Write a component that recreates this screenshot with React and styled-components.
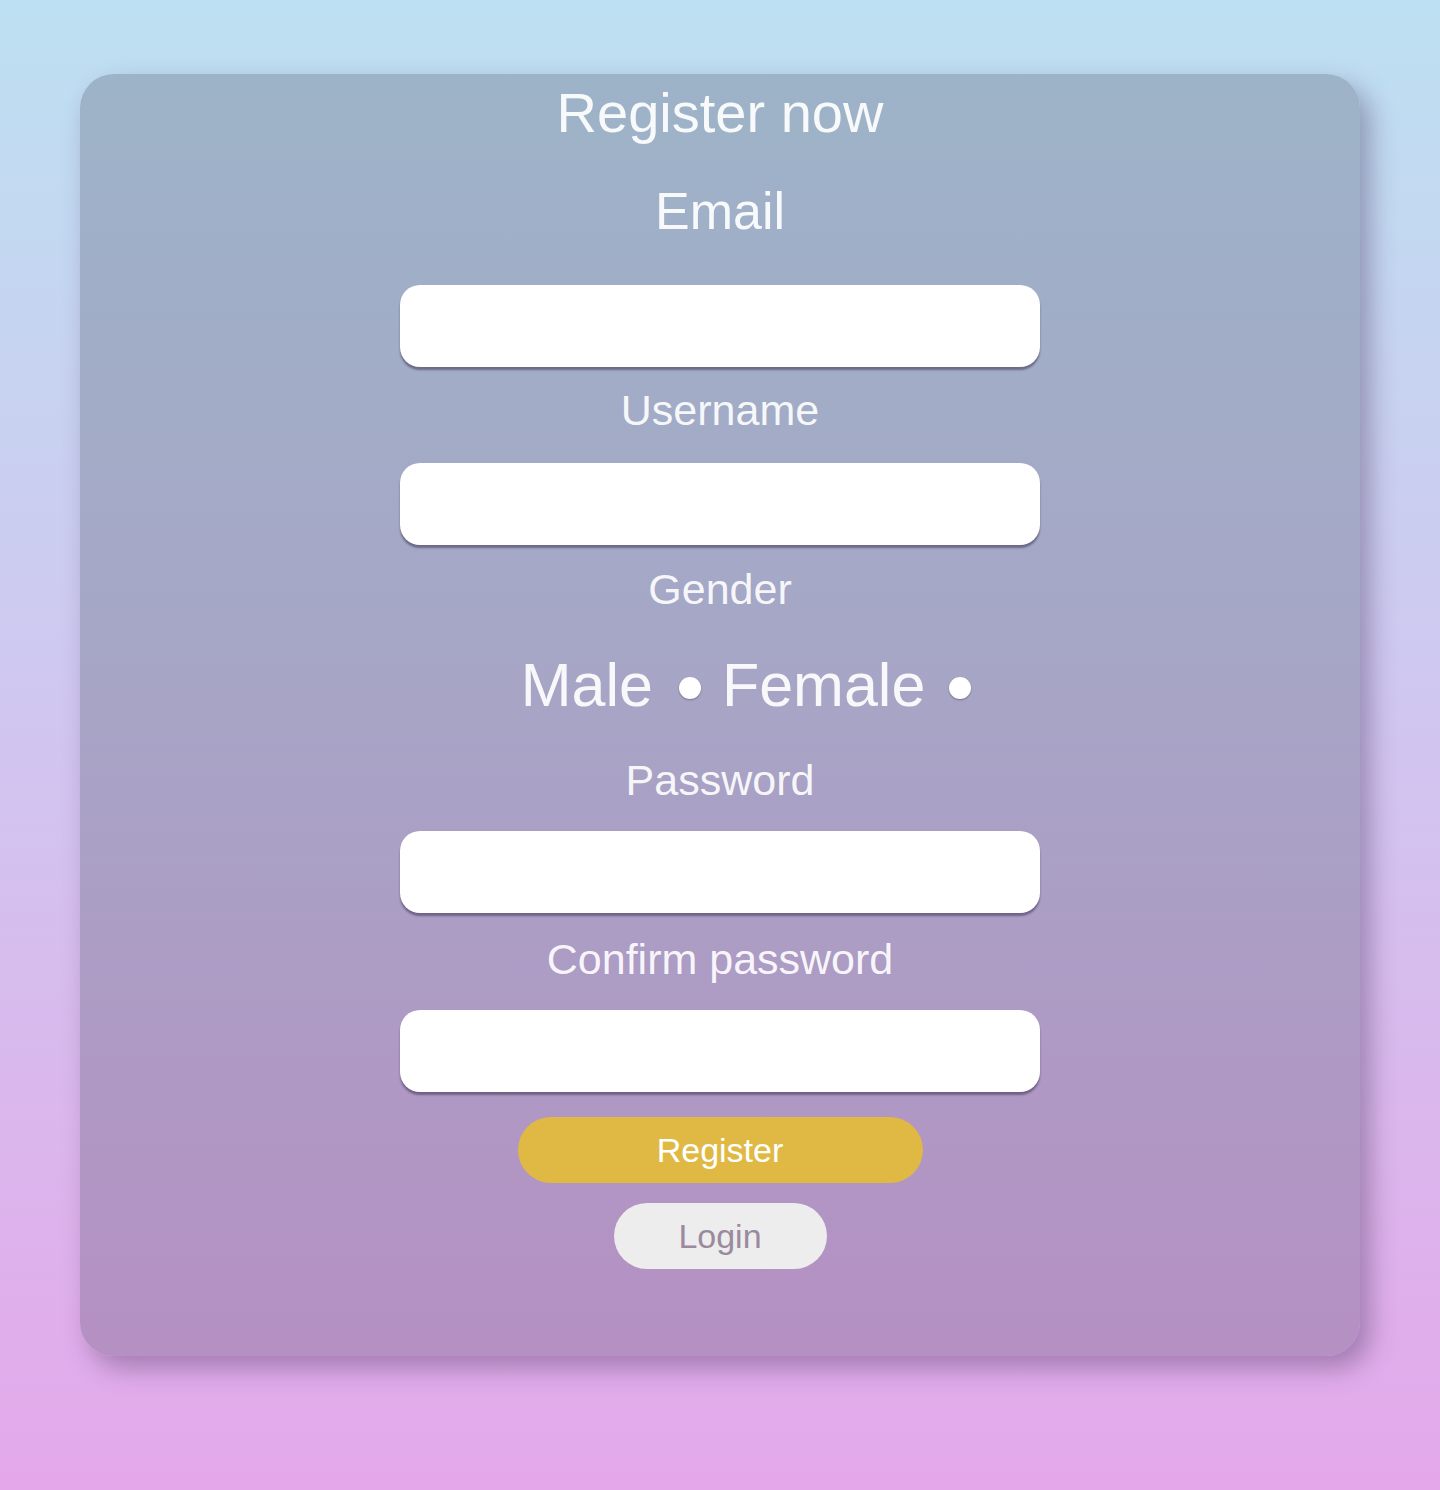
import styled, { createGlobalStyle } from "styled-components";

const GlobalStyle = createGlobalStyle`
  html, body {
    margin: 0;
    padding: 0;
  }
  body {
    font-family: "Liberation Sans", Arial, sans-serif;
    background: linear-gradient(180deg, #bde0f2 0%, #cfc8f0 45%, #e4a8ea 100%);
    min-height: 1490px;
  }
`;

const Page = styled.div`
  min-height: 1490px;
  box-sizing: border-box;
  padding: 74px 80px 0;
`;

const Card = styled.form`
  display: flex;
  flex-direction: column;
  align-items: center;
  border-radius: 34px;
  background: linear-gradient(180deg, #9db3c8 0%, #a6a6c6 45%, #b590c3 100%);
  box-shadow: 10px 12px 26px rgba(70, 50, 90, 0.4);
  padding: 9px 0 87px;
  color: rgba(255, 255, 255, 0.92);
`;

const Title = styled.h1`
  margin: 0;
  font-size: 56px;
  line-height: 60px;
  font-weight: 400;
`;

const Label = styled.label`
  display: block;
  font-size: ${(p) => p.$size || 43}px;
  line-height: ${(p) => (p.$size ? 60 : 50)}px;
  margin-top: ${(p) => p.$top}px;
  margin-bottom: ${(p) => p.$bottom}px;
`;

const Input = styled.input`
  box-sizing: border-box;
  width: 640px;
  height: 82px;
  border: none;
  border-radius: 20px;
  background: #fff;
  box-shadow: 0 3px 2px rgba(40, 30, 60, 0.45);
  outline: none;
  font-size: 32px;
  padding: 0 24px;
`;

const RadioRow = styled.div`
  display: flex;
  align-items: center;
  padding-left: 52px;
  margin-top: 36px;
  font-size: 61px;
  line-height: 70px;
`;

const RadioText = styled.span`
  margin-right: ${(p) => p.$gap}px;
`;

const Dot = styled.span`
  width: 22px;
  height: 22px;
  border-radius: 50%;
  background: #fff;
  box-shadow: 0 1px 2px rgba(0, 0, 0, 0.3);
  margin-top: 6px;
  margin-right: ${(p) => p.$gap || 0}px;
`;

const Button = styled.button`
  border: none;
  border-radius: 40px;
  font-family: "Liberation Sans", Arial, sans-serif;
  font-size: 34px;
  height: 66px;
  width: ${(p) => p.$w}px;
  margin-top: ${(p) => p.$top}px;
  background: ${(p) => p.$bg};
  color: ${(p) => p.$color};
  cursor: pointer;
`;

export default function App() {
  return (
    <>
      <GlobalStyle />
      <Page>
        <Card onSubmit={(e) => e.preventDefault()}>
          <Title>Register now</Title>
          <Label $size={52} $top={38} $bottom={44}>
            Email
          </Label>
          <Input type="email" />
          <Label $top={18} $bottom={28}>
            Username
          </Label>
          <Input type="text" />
          <Label $top={19} $bottom={0}>
            Gender
          </Label>
          <RadioRow>
            <RadioText $gap={26}>Male</RadioText>
            <Dot $gap={21} />
            <RadioText $gap={24}>Female</RadioText>
            <Dot />
          </RadioRow>
          <Label $top={35} $bottom={26}>
            Password
          </Label>
          <Input type="password" />
          <Label $top={21} $bottom={26}>
            Confirm password
          </Label>
          <Input type="password" />
          <Button $w={405} $top={25} $bg="#e0b944" $color="#fff">
            Register
          </Button>
          <Button $w={213} $top={20} $bg="#ededed" $color="#9b8a9e" type="button">
            Login
          </Button>
        </Card>
      </Page>
    </>
  );
}
